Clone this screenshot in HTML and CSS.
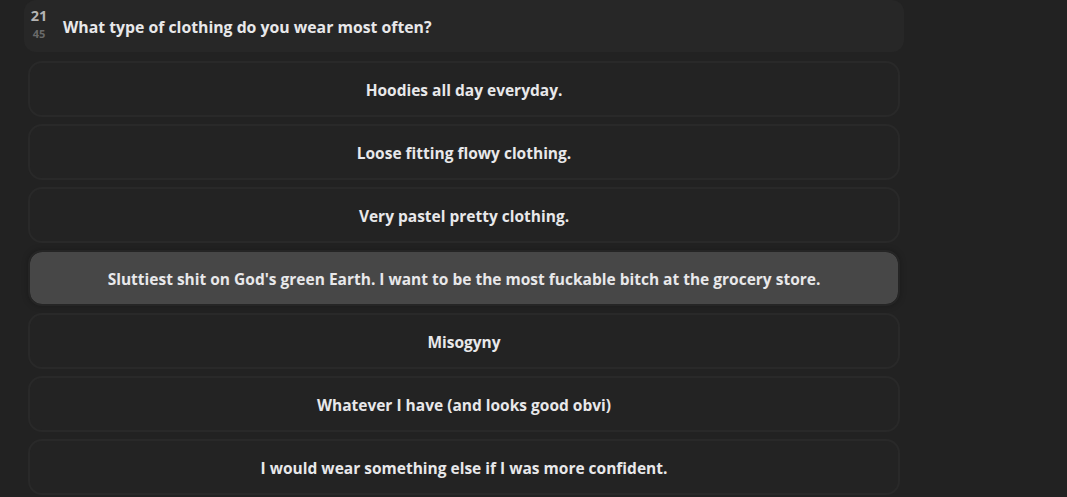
FILE: index.html
```html
<!DOCTYPE html>
<html>
<head>
<meta charset="utf-8">
<link rel="stylesheet" href="styles.css">
</head>
<body>
<div class="quiz">
  <div class="question">
    <div class="counter">
      <span class="current">21</span>
      <span class="total">45</span>
    </div>
    <div class="qtext">What type of clothing do you wear most often?</div>
  </div>
  <div class="options">
    <div class="option">Hoodies all day everyday.</div>
    <div class="option">Loose fitting flowy clothing.</div>
    <div class="option">Very pastel pretty clothing.</div>
    <div class="option selected">Sluttiest shit on God's green Earth. I want to be the most fuckable bitch at the grocery store.</div>
    <div class="option">Misogyny</div>
    <div class="option">Whatever I have (and looks good obvi)</div>
    <div class="option">I would wear something else if I was more confident.</div>
  </div>
</div>
</body>
</html>
```
FILE: styles.css
```css
html, body {
  margin: 0;
  padding: 0;
  background: #222222;
  font-family: "Open Sans", "Noto Sans", "DejaVu Sans", sans-serif;
  overflow: hidden;
}
.quiz {
  width: 880px;
  margin-left: 24px;
}
.question {
  display: flex;
  align-items: center;
  height: 52px;
  background: #272727;
  border-radius: 12px;
  padding-left: 7px;
  gap: 16px;
}
.counter {
  display: flex;
  flex-direction: column;
  align-items: center;
  width: 16px;
  line-height: 1;
  font-weight: 700;
}
.current {
  font-size: 14.5px;
  color: #b4b4b4;
  margin-top: -4px;
}
.total {
  font-size: 11px;
  color: #6a6a6a;
  margin-top: 5px;
}
.qtext {
  color: #e8e8ea;
  font-size: 15.8px;
  font-weight: 700;
  margin-top: 1px;
}
.options {
  display: flex;
  flex-direction: column;
  gap: 7px;
  margin: 9px 4px 0;
}
.option {
  height: 51px;
  padding-top: 1px;
  border: 2px solid #292929;
  border-radius: 14px;
  background: #232323;
  display: flex;
  align-items: center;
  justify-content: center;
  color: #e8e8ea;
  font-size: 15.5px;
  font-weight: 700;
}
.option.selected {
  background: #474747;
  border-color: #252525;
  background-clip: padding-box;
  box-shadow: 0 0 6px rgba(0, 0, 0, 0.25);
}
```
